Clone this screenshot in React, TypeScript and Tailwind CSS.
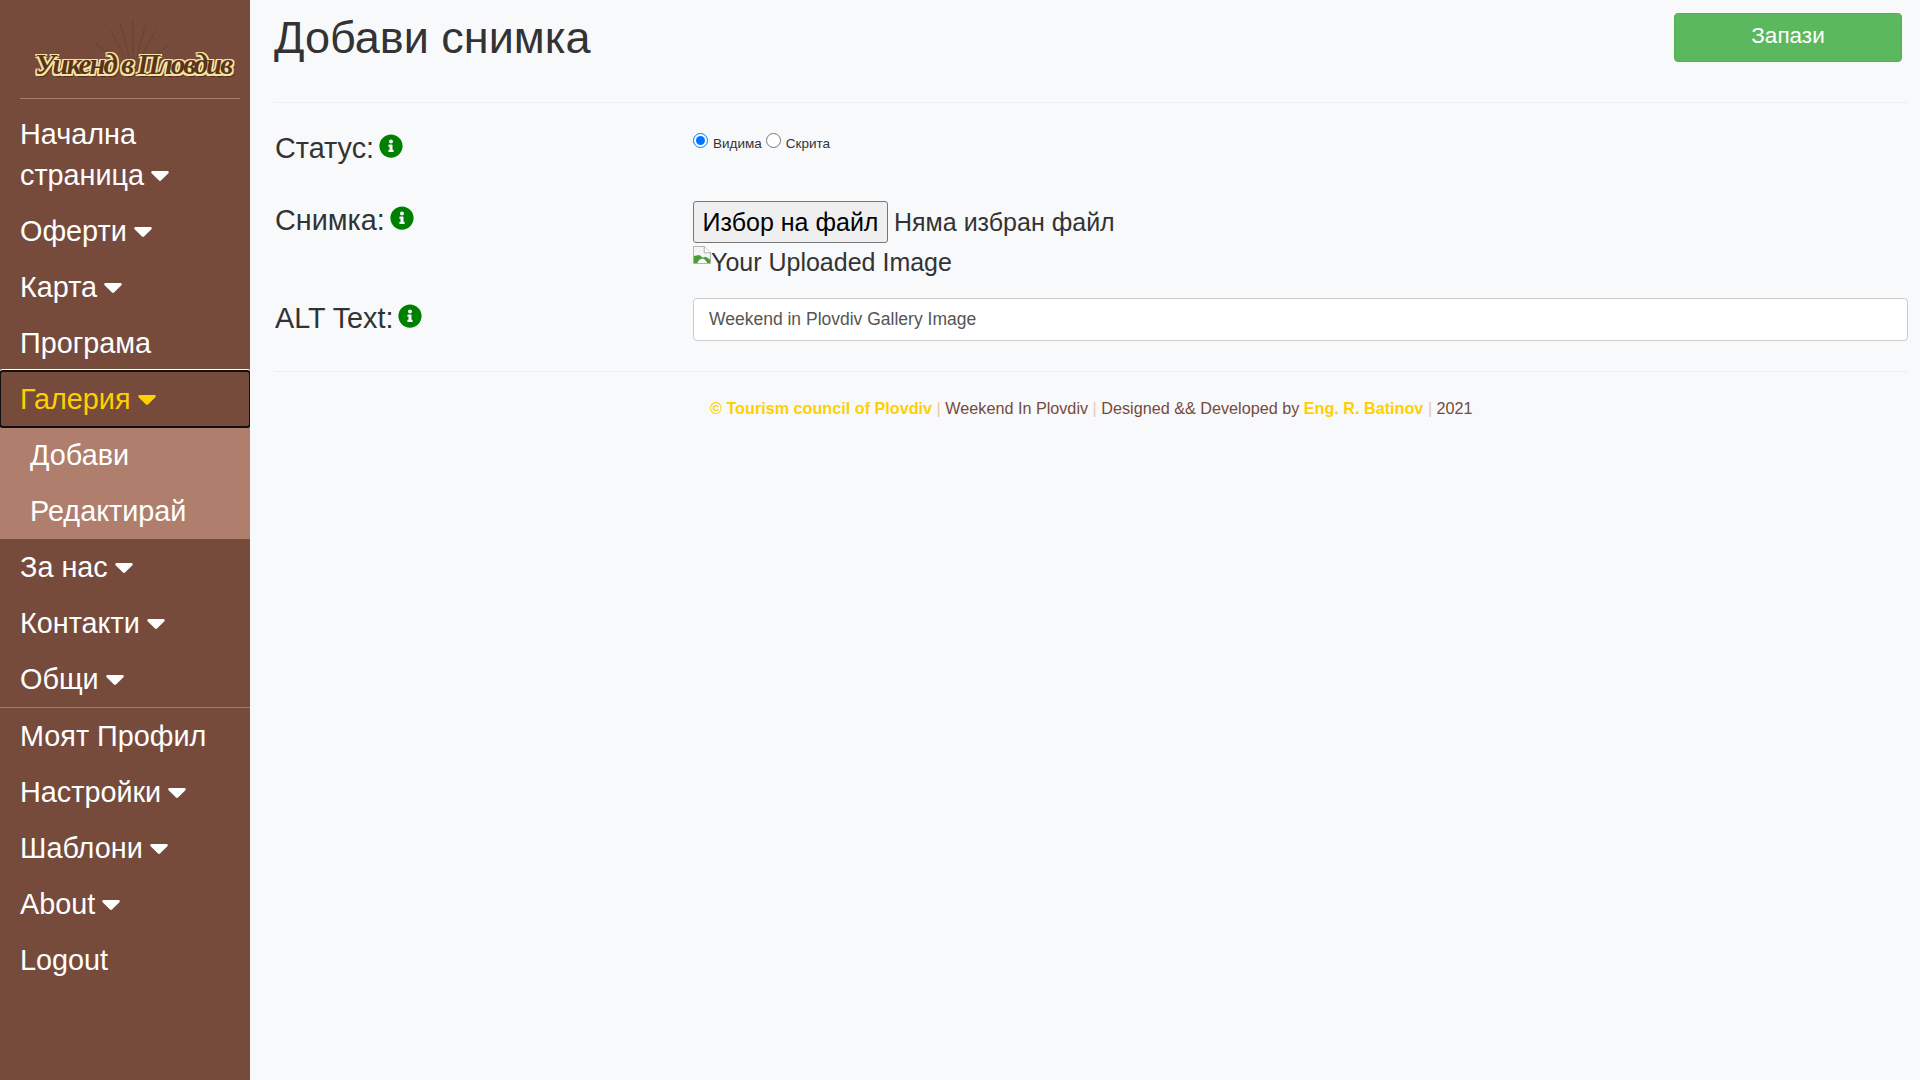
import React from "react";
import { FaInfoCircle } from "react-icons/fa";

const font = { fontFamily: '"Liberation Sans", Arial, sans-serif' };

function NavItem({ label, caret = false, active = false, multi = false }: { label: React.ReactNode; caret?: boolean; active?: boolean; multi?: boolean }) {
  return (
    <a
      className={
        "block pl-5 pr-3 py-[7px] text-[28.8px] " +
        (multi ? "leading-[41px] " : "leading-[42px] ") +
        (active
          ? "text-[#ffd000] rounded-[3px] outline-2 -outline-offset-1 outline-[#111111] shadow-[0_0_0_2px_#ffffff]"
          : "text-white")
      }
    >
      {label}
      {caret && <Caret className={active ? "text-[#ffd000]" : "text-white"} />}
    </a>
  );
}

function Caret({ className }: { className: string }) {
  return (
    <svg className={"inline-block ml-[7px] align-[4px] w-[18px] h-[10px] " + className} viewBox="0 0 18 10" fill="currentColor">
      <path d="M1.6 0h14.8c1.2 0 1.8 1.4 1 2.2L10 9.5c-.6.6-1.4.6-2 0L.6 2.2C-.2 1.4.4 0 1.6 0z" />
    </svg>
  );
}

function Logo() {
  return (
    <div className="relative h-[98px] flex items-end justify-center pl-[16px]">
      <svg className="absolute left-[78px] top-[14px] w-[110px] h-[62px]" viewBox="0 0 110 62" stroke="#68432c" strokeWidth="1" fill="none">
        <path d="M55 58L55 6M55 58L42 8M55 58L68 8M55 58L32 16M55 58L78 16M55 58L18 30M55 58L92 30M55 58L10 44M55 58L100 44" />
      </svg>
      <span
        className="relative mb-[16px] text-[29px] leading-[36px] italic font-bold text-[#5a3418] whitespace-nowrap tracking-[-2px]"
        style={{
          fontFamily: '"Liberation Serif", serif',
          textShadow:
            "1.5px 0 0 #f5e3a6,-1.5px 0 0 #f5e3a6,0 1.5px 0 #f5e3a6,0 -1.5px 0 #f5e3a6,1.5px 1.5px 0 #f5e3a6,-1.5px -1.5px 0 #f5e3a6,1.5px -1.5px 0 #f5e3a6,-1.5px 1.5px 0 #f5e3a6,2px 3px 1px #4a2a14",
        }}
      >
        Уикенд в Пловдив
      </span>
    </div>
  );
}

function Label({ children, className = "pt-px" }: { children: React.ReactNode; className?: string }) {
  return (
    <div className={"w-[419px] shrink-0 pl-px text-[28.8px] leading-[42px] text-[#333333] flex items-start gap-[5px] " + className}>
      <span>{children}</span>
      <FaInfoCircle className="text-[#008000] w-6 h-6 mt-[7px]" />
    </div>
  );
}

export default function App() {
  return (
    <div className="flex min-h-screen bg-[#f8f9fb]" style={font}>
      <aside className="w-[250px] shrink-0 bg-[#764b3c] overflow-hidden">
        <Logo />
        <div className="ml-5 mr-[10px] h-px bg-[#a87a68]" />
        <nav className="pt-2">
          <NavItem label={<>Начална<br />страница</>} caret multi />
          <NavItem label="Оферти" caret />
          <NavItem label="Карта" caret />
          <NavItem label="Програма" />
          <NavItem label="Галерия" caret active />
          <div className="bg-[#af7e6d]">
            <div className="pl-[30px] py-[7px] text-[28.8px] leading-[42px] text-white">Добави</div>
            <div className="pl-[30px] py-[7px] text-[28.8px] leading-[42px] text-white">Редактирай</div>
          </div>
          <NavItem label="За нас" caret />
          <NavItem label="Контакти" caret />
          <NavItem label="Общи" caret />
          <div className="h-px bg-[#a87a68]" />
          <NavItem label="Моят Профил" />
          <NavItem label="Настройки" caret />
          <NavItem label="Шаблони" caret />
          <NavItem label="About" caret />
          <NavItem label="Logout" />
        </nav>
      </aside>

      <main className="flex-1 pl-6 pr-3 min-w-0">
        <header className="h-[103px] border-b border-[#eceef1] flex items-start justify-between">
          <h1 className="mt-[12px] text-[45px] leading-[52px] text-[#333333] font-normal">Добави снимка</h1>
          <button className="mt-[13px] mr-[6px] w-[228px] h-[49px] pb-[2px] rounded-[4px] bg-[#5cb85c] border border-[#55b055] text-white text-[22.5px] leading-none">
            Запази
          </button>
        </header>

        <div className="pt-[23px]">
          <div className="flex h-[72px]">
            <Label>Статус:</Label>
            <div className="flex items-start pt-[6px] text-[13.5px] leading-[20px] text-[#333333]">
              <input type="radio" name="status" defaultChecked className="w-[15px] h-[15px] mt-px mr-[5px] accent-[#0075ff]" />
              <span className="mt-[2px]">Видима</span>
              <input type="radio" name="status" className="w-[15px] h-[15px] mt-px ml-[4px] mr-[5px]" />
              <span className="mt-[2px]">Скрита</span>
            </div>
          </div>

          <div className="flex h-[99px]">
            <Label>Снимка:</Label>
            <div className="pt-[3px] text-[25px] leading-[41px]">
              <div className="flex items-center">
                <span className="inline-flex items-center justify-center w-[195px] h-[42px] bg-[#efefef] border border-[#767676] rounded-[3px] text-black">
                  Избор на файл
                </span>
                <span className="ml-[6px] text-[#333333]">Няма избран файл</span>
              </div>
              <div className="flex items-start text-[#333333] h-[41px] -mt-px">
                <svg className="w-[18px] h-[18px] mt-[4px] shrink-0" viewBox="0 0 20 20">
                  <path d="M0.5 0.5h12l7 7v12h-19z" fill="#f4f4f4" stroke="#a8a8a8" />
                  <path d="M12.5 0.5v7h7" fill="#fff" stroke="#a8a8a8" />
                  <path d="M1 11l6-1 4 3 3-1 5 3v4H1z" fill="#4f9a3a" />
                  <path d="M5 19c1-4 5-6 8-4l3 4z" fill="#ffffff" />
                </svg>
                <span>Your Uploaded Image</span>
              </div>
            </div>
          </div>

          <div className="flex h-[75px] border-b border-[#eceef1]">
            <Label className="pt-0">ALT Text:</Label>
            <div className="flex-1 min-w-0">
              <input
                readOnly
                value="Weekend in Plovdiv Gallery Image"
                className="block w-full h-[43px] mt-[1px] px-[15px] bg-white border border-[#cccccc] rounded-[4px] text-[17.5px] text-[#555555] outline-none"
                style={font}
              />
            </div>
          </div>
        </div>

        <footer className="mt-[24px] pl-[436px] text-[16.2px] leading-[24px] text-[#764b3c] whitespace-nowrap">
          <b className="text-[#ffd000]">© Tourism council of Plovdiv</b>
          <span className="text-[#e8c8b0]"> | </span>Weekend In Plovdiv
          <span className="text-[#e8c8b0]"> | </span>Designed &amp;&amp; Developed by{" "}
          <b className="text-[#ffd000]">Eng. R. Batinov</b>
          <span className="text-[#e8c8b0]"> | </span>2021
        </footer>
      </main>
    </div>
  );
}
